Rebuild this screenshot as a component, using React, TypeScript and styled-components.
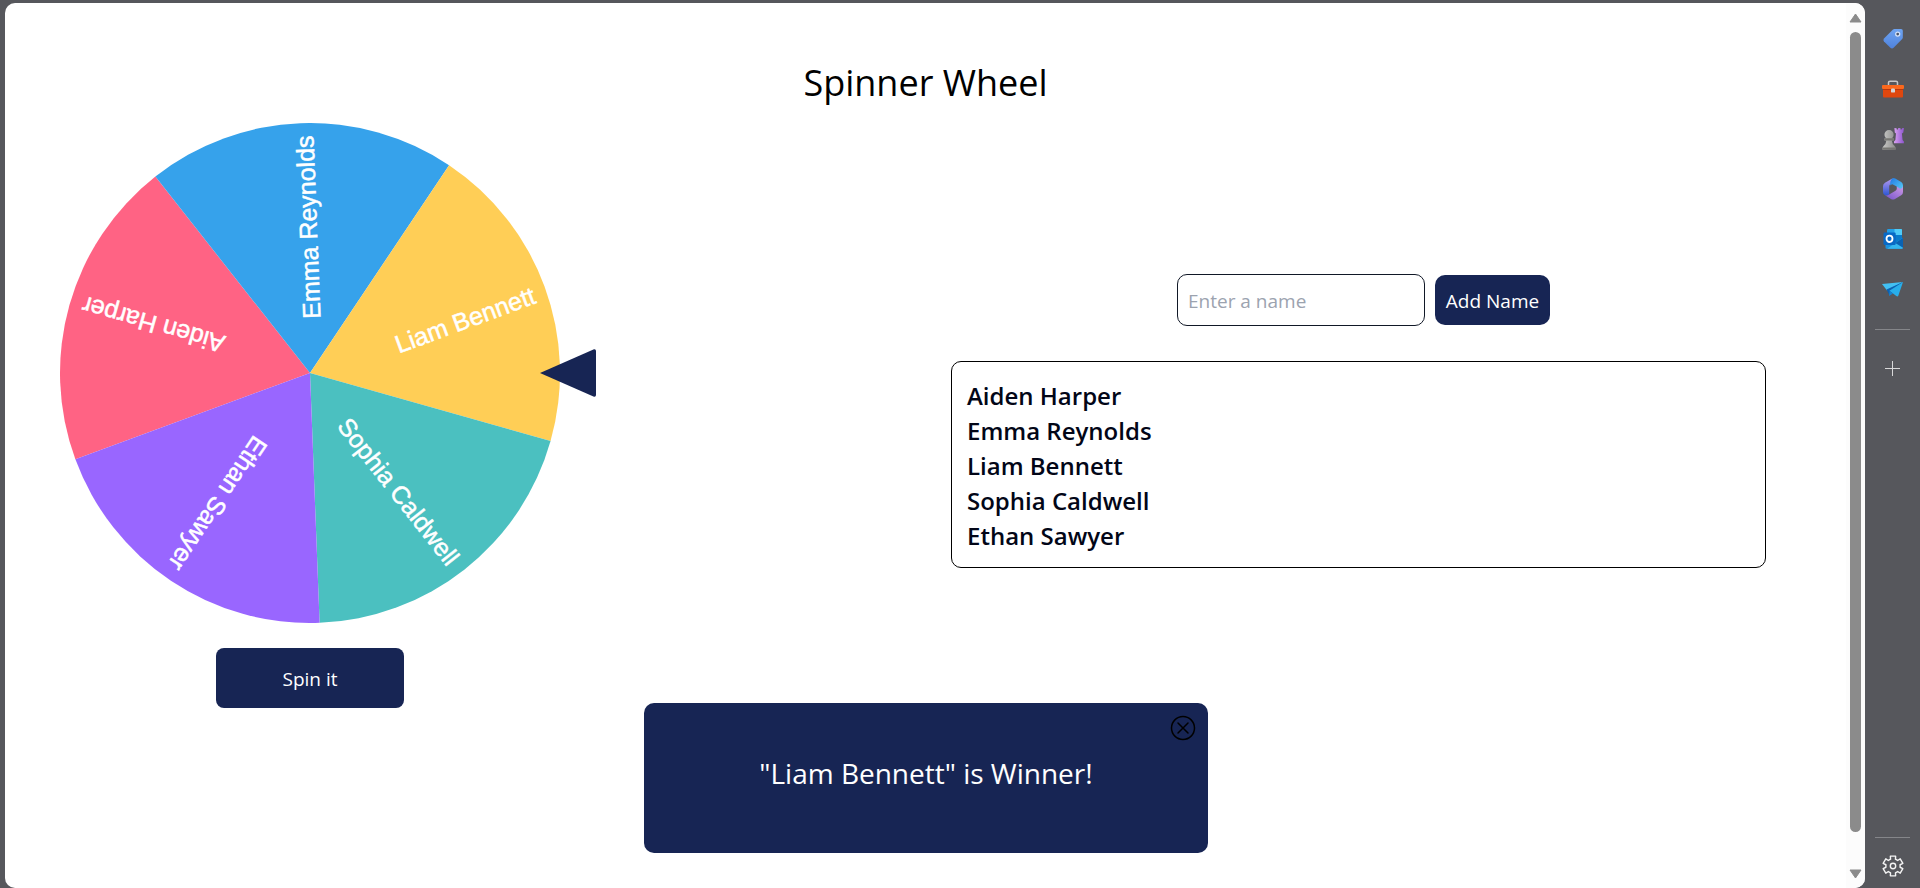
import React, { useState } from 'react';
import styled, { createGlobalStyle } from 'styled-components';

const navy = '#172554';
const chrome = '#56575c';

const GlobalStyle = createGlobalStyle`
  *, *::before, *::after { box-sizing: border-box; }
  body {
    margin: 0;
    background: ${chrome};
    color: #000;
    font-family: "Segoe UI", "Open Sans", "Noto Sans", sans-serif;
  }
  h1, ul, p { margin: 0; padding: 0; }
  button, input { font: inherit; }
`;

const Window = styled.div`
  display: flex;
  height: 100vh;
  padding: 3px 0 0 5px;
`;

const Viewport = styled.div`
  position: relative;
  flex: 1;
  min-width: 0;
  display: flex;
  overflow: hidden;
  background: #fff;
  border-radius: 10px;
`;

const Page = styled.main`
  flex: 1;
  min-width: 0;
  padding: 50px 80px 0 55px;
`;

const Title = styled.h1`
  margin: 0 -80px 10px -55px;
  text-align: center;
  font-size: 36px;
  line-height: 60px;
  font-weight: 400;
`;

const Columns = styled.div`
  display: grid;
  grid-template-columns: 1fr 1fr;
  column-gap: 76px;
  align-items: start;
`;

const WheelColumn = styled.section`
  display: flex;
  flex-direction: column;
  align-items: center;
  gap: 25px;
  width: 500px;
`;

const WheelStage = styled.div`
  position: relative;
  width: 500px;
  height: 500px;
`;

const WheelDrawing = styled.svg`
  display: block;
  width: 100%;
  height: 100%;
  font-family: Arial, "Liberation Sans", sans-serif;
`;

const Pointer = styled.svg`
  position: absolute;
  left: 480px;
  top: 226px;
  width: 56px;
  height: 48px;
`;

const SpinButton = styled.button`
  width: 188px;
  height: 60px;
  padding: 2px 0 0;
  border: 0;
  border-radius: 8px;
  background: ${navy};
  color: #fff;
  font-size: 19px;
  cursor: pointer;
`;

const NamesColumn = styled.section`
  display: flex;
  flex-direction: column;
  gap: 35px;
  padding-top: 151px;
`;

const NameForm = styled.form`
  display: flex;
  justify-content: center;
  align-items: center;
  gap: 10px;
  padding-left: 10px;
`;

const NameInput = styled.input`
  width: 248px;
  height: 52px;
  padding: 2px 10px 0;
  border: 1px solid #111827;
  border-radius: 10px;
  background: #fff;
  font-size: 19px;
  &::placeholder { color: #9ca3af; opacity: 1; }
`;

const AddButton = styled.button`
  width: 115px;
  height: 50px;
  padding: 2px 0 0;
  border: 0;
  border-radius: 10px;
  background: ${navy};
  color: #fff;
  font-size: 19px;
  white-space: nowrap;
  cursor: pointer;
`;

const NameList = styled.ul`
  && { padding: 16px 15px 14px; }
  list-style: none;
  border: 1px solid #000;
  border-radius: 10px;
  color: #020617;
  font-size: 24px;
  line-height: 35px;
  font-weight: 600;
`;

const Toast = styled.div`
  position: absolute;
  left: calc(50% - 9px);
  bottom: 35px;
  transform: translateX(-50%);
  width: 564px;
  height: 150px;
  padding-bottom: 10px;
  display: flex;
  align-items: center;
  justify-content: center;
  border-radius: 10px;
  background: ${navy};
  color: #fff;
  font-size: 28px;
`;

const CloseButton = styled.button`
  position: absolute;
  top: 12px;
  right: 12px;
  width: 26px;
  height: 26px;
  padding: 0;
  border: 0;
  background: none;
  cursor: pointer;
  svg { display: block; }
`;

const ScrollTrack = styled.div`
  display: flex;
  flex-direction: column;
  align-items: center;
  justify-content: space-between;
  width: 19px;
  padding: 10px 0 9px;
  background: #fcfcfc;
  svg { display: block; }
`;

const ScrollThumb = styled.div`
  flex: 1;
  width: 11px;
  margin: 9px 0 37px;
  border-radius: 6px;
  background: #8b8b8b;
`;

const Sidebar = styled.nav`
  display: flex;
  flex-direction: column;
  align-items: center;
  width: 55px;
  padding-top: 11px;
`;

const SidebarButton = styled.button`
  display: flex;
  flex-shrink: 0;
  align-items: center;
  justify-content: center;
  width: 50px;
  height: 50px;
  padding: 0;
  border: 0;
  background: none;
  cursor: pointer;
  svg { display: block; overflow: visible; }
`;

const Divider = styled.hr<{ $top: string }>`
  flex-shrink: 0;
  width: 35px;
  height: 1px;
  margin: ${(p) => p.$top} 0 0;
  border: 0;
  background: #85868a;
`;

const AddSlot = styled.div`
  padding-top: 14px;
`;

const SettingsSlot = styled.div`
  padding-top: 3px;
  margin-bottom: -3px;
`;

const Icon = ({ children }: { children: React.ReactNode }) => (
  <svg width="22" height="22" viewBox="0 0 22 22" aria-hidden="true">{children}</svg>
);

const TagIcon = () => (
  <Icon>
    <defs>
      <linearGradient id="tag" x1="0" y1="0" x2="0" y2="1">
        <stop offset="0" stopColor="#6ea4f2" /><stop offset="1" stopColor="#4f82dc" />
      </linearGradient>
    </defs>
    <path d="M11 1.4Q11.6 1 12.4 1H19Q20.8 1 20.8 2.8V9.4Q20.8 10.3 20.2 11L11.6 19.8Q10 21.3 8.4 19.8L2 13.6Q.7 12 2 10.4Z" fill="url(#tag)" />
    <circle cx="15.7" cy="6.1" r="2" fill="#48536a" stroke="#d5e2f7" strokeWidth="1.3" />
  </Icon>
);

const ToolboxIcon = () => (
  <Icon>
    <path d="M6.5 8V4.6Q6.5 3.2 8 3.2H14Q15.5 3.2 15.5 4.6V8" fill="none" stroke="#c5c6c8" strokeWidth="1.5" />
    <rect x="1" y="9" width="20" height="10.5" rx="1" fill="#df470e" />
    <rect x="0" y="7" width="22" height="4" rx="1" fill="#fa681d" />
    <path d="M1 11H21V12H1Z" fill="#b9360a" />
    <rect x="9" y="10.4" width="4" height="4.2" rx="1.2" fill="#d4d5d8" />
  </Icon>
);

const ChessIcon = () => (
  <Icon>
    <defs>
      <linearGradient id="rook"><stop offset="0" stopColor="#d9a1f2" /><stop offset="1" stopColor="#8d56cd" /></linearGradient>
      <linearGradient id="pawn"><stop offset="0" stopColor="#c9c9c7" /><stop offset="1" stopColor="#8b8c8b" /></linearGradient>
    </defs>
    <path d="M12.4 0L14.6.3 14.8 1.5H16L16.2.1H18.4L18.6 1.5H19.7L20 .3 22 0 21.3 4.4 19.9 5.5 20.6 12 21.9 13.6V15.3H12V13.6L13.4 12 14 5.5 12.8 4.4Z" fill="url(#rook)" />
    <path d="M2.6 10.2H4.1A4.6 4.6 0 1 1 10 10.2H11.6V12.6H9.8Q10.2 16 12.4 17.8 13.8 18.8 13.8 21.6H.4Q.4 18.8 1.8 17.8 4 16 4.4 12.6H2.6Z" fill="url(#pawn)" />
    <path d="M2.6 10.3H11.6V12.5H2.6ZM.4 19.6H13.8V21.6H.4Z" fill="#777773" />
  </Icon>
);

const SuiteIcon = () => (
  <Icon>
    <defs>
      <linearGradient id="suiteA" x1="0" y1="0" x2="0" y2="1"><stop offset="0" stopColor="#b79af0" /><stop offset="1" stopColor="#2d57d2" /></linearGradient>
      <linearGradient id="suiteB" x1="0" y1="0" x2="1" y2="1"><stop offset="0" stopColor="#2177e3" /><stop offset="1" stopColor="#5ad1f7" /></linearGradient>
      <linearGradient id="suiteC" x1="0" y1="1" x2="1" y2="0"><stop offset="0" stopColor="#7351c9" /><stop offset="1" stopColor="#cf9ae6" /></linearGradient>
    </defs>
    <path d="M10.4.4L3 4.7Q1 5.9 1 8.2V14Q1 16.2 3 17.2 5.2 17.8 7.2 16.5V8.6Q7.2 7 8.6 6.1L12 4Z" fill="url(#suiteA)" />
    <path d="M10.2.4Q11.7-.3 13.2.5L19.2 4Q21 5.2 21 7.4V12.7L14.8 9.4V8.6L10.4 6.2Q8.8 6.4 8.2 7.6 7.8 2.2 10.2.4Z" fill="url(#suiteB)" />
    <path d="M21 8V14Q21 16.2 19.2 17.3L13 21Q11 22.1 9 21L3 17.3Q5.2 17.8 7.2 16.5L13.5 12.8Q14.8 12 14.8 10.6V8.4L17.8 10.5Q20.5 11.2 21 8Z" fill="url(#suiteC)" />
  </Icon>
);

const MailIcon = () => (
  <Icon>
    <rect x="5" y="1" width="15" height="15" rx="1.2" fill="#239fe6" />
    <path d="M12.5 1H19Q20 1 20 2V7H12.5Z" fill="#4fcbf8" />
    <path d="M5 7H20V13L12.5 15Z" fill="#087acb" />
    <path d="M3.5 11L21 20Q20.6 20.7 19.7 20.7H4.6Q3.5 20.7 3.5 19.4Z" fill="#1a92df" />
    <path d="M21 9.8V19.4Q21 20.7 19.7 20.7H5L21 9.8Z" fill="#35b6ef" />
    <path d="M21 9.8V19.8L13.3 15Z" fill="#0a62b2" />
    <rect x="1.5" y="4.6" width="12.2" height="12.4" rx="1.2" fill="#0869c5" />
    <ellipse cx="7.5" cy="10.8" rx="3" ry="3.2" fill="none" stroke="#fff" strokeWidth="1.8" />
  </Icon>
);

const PlaneIcon = () => (
  <Icon>
    <path d="M0 5.9L21 4 5 12.4Z" fill="#42c0f3" />
    <path d="M4.5 11.6L21 4 7.6 17.6Z" fill="#0b61b2" />
    <path d="M7.4 12.8L21 4 16.4 17.4Q15.8 18.9 14.3 18.1Z" fill="#28aeea" />
    <path d="M7.6 13L11 15.4 7 18Z" fill="#1683d1" />
  </Icon>
);

const gearPath = (() => {
  const points: string[] = [];
  for (let i = 0; i < 6; i++) {
    const stops: [number, number][] = [[-20, 7.2], [-15, 10.2], [15, 10.2], [20, 7.2]];
    stops.forEach(([offset, radius]) => {
      const a = ((i * 60 - 90 + offset) * Math.PI) / 180;
      points.push(`${(11 + radius * Math.cos(a)).toFixed(2)} ${(11 + radius * Math.sin(a)).toFixed(2)}`);
    });
  }
  return `M${points.join('L')}Z`;
})();

const GearIcon = () => (
  <Icon>
    <path d={gearPath} fill="none" stroke="#f4f4f4" strokeWidth="1.4" strokeLinejoin="round" />
    <circle cx="11" cy="11" r="2.7" fill="none" stroke="#f4f4f4" strokeWidth="1.4" />
  </Icon>
);

const shortcuts = [
  { label: 'Shopping', Glyph: TagIcon },
  { label: 'Tools', Glyph: ToolboxIcon },
  { label: 'Games', Glyph: ChessIcon },
  { label: 'Microsoft 365', Glyph: SuiteIcon },
  { label: 'Outlook', Glyph: MailIcon },
  { label: 'Drop', Glyph: PlaneIcon },
];

const sliceColors = ['#ff6384', '#36a2eb', '#ffce56', '#4bc0c0', '#9966ff'];

function Wheel({ names, rotation }: { names: string[]; rotation: number }) {
  const step = 360 / names.length;
  const edge = (deg: number) => {
    const a = (deg * Math.PI) / 180;
    return `${200 * Math.cos(a)} ${200 * Math.sin(a)}`;
  };
  return (
    <WheelDrawing viewBox="-200 -200 400 400" role="img" aria-label="Wheel of names">
      {names.map((name, i) => {
        const start = rotation + i * step;
        return (
          <g key={name + i}>
            <path d={`M0 0L${edge(start)}A200 200 0 0 1 ${edge(start + step)}Z`} fill={sliceColors[i % sliceColors.length]} />
            <text x="190" y="10" textAnchor="end" fontSize="20" fill="#fff" stroke="#fff" strokeWidth="0.4" transform={`rotate(${start + step / 2})`}>{name}</text>
          </g>
        );
      })}
    </WheelDrawing>
  );
}

export default function App() {
  const [names, setNames] = useState(['Aiden Harper', 'Emma Reynolds', 'Liam Bennett', 'Sophia Caldwell', 'Ethan Sawyer']);
  const [draft, setDraft] = useState('');
  const [rotation, setRotation] = useState(159.8);
  const [winner, setWinner] = useState<string | null>('Liam Bennett');

  const spin = () => {
    const next = Math.random() * 360;
    const index = Math.floor((360 - next) / (360 / names.length)) % names.length;
    setRotation(next);
    setWinner(names[index]);
  };

  const addName = (event: React.FormEvent) => {
    event.preventDefault();
    if (!draft.trim()) return;
    setNames([...names, draft.trim()]);
    setDraft('');
  };

  return (
    <>
      <GlobalStyle />
      <Window>
        <Viewport>
          <Page>
            <Title>Spinner Wheel</Title>
            <Columns>
              <WheelColumn>
                <WheelStage>
                  <Wheel names={names} rotation={rotation} />
                  <Pointer viewBox="0 0 56 48" aria-hidden="true">
                    <path d="M0 24L54 .3Q56 0 56 2V46Q56 48 54 47.7Z" fill={navy} />
                  </Pointer>
                </WheelStage>
                <SpinButton type="button" onClick={spin}>Spin it</SpinButton>
              </WheelColumn>
              <NamesColumn>
                <NameForm onSubmit={addName}>
                  <NameInput aria-label="Name" placeholder="Enter a name" value={draft} onChange={(e) => setDraft(e.target.value)} />
                  <AddButton type="submit">Add Name</AddButton>
                </NameForm>
                <NameList>
                  {names.map((name, i) => <li key={name + i}>{name}</li>)}
                </NameList>
              </NamesColumn>
            </Columns>
          </Page>
          <ScrollTrack aria-hidden="true">
            <svg width="13" height="10" viewBox="0 0 13 10"><path d="M6.5 1L12 9H1Z" fill="#8b8b8b" stroke="#8b8b8b" strokeLinejoin="round" /></svg>
            <ScrollThumb />
            <svg width="13" height="10" viewBox="0 0 13 10"><path d="M6.5 9L12 1H1Z" fill="#8b8b8b" stroke="#8b8b8b" strokeLinejoin="round" /></svg>
          </ScrollTrack>
          {winner && (
            <Toast role="status">
              <p>"{winner}" is Winner!</p>
              <CloseButton type="button" aria-label="Close" onClick={() => setWinner(null)}>
                <svg width="26" height="26" viewBox="0 0 26 26" fill="none" stroke="#000" strokeWidth="1.5">
                  <circle cx="13" cy="13" r="11.5" />
                  <path d="M8 8L18 18M18 8L8 18" strokeLinecap="round" />
                </svg>
              </CloseButton>
            </Toast>
          )}
        </Viewport>
        <Sidebar aria-label="Browser sidebar">
          {shortcuts.map(({ label, Glyph }) => (
            <SidebarButton key={label} type="button" aria-label={label}><Glyph /></SidebarButton>
          ))}
          <Divider $top="15px" />
          <AddSlot>
            <SidebarButton type="button" aria-label="Add">
              <Icon><path d="M10.5 3V18M3 10.5H18" stroke="#d8d8d9" strokeWidth="1" /></Icon>
            </SidebarButton>
          </AddSlot>
          <Divider $top="auto" />
          <SettingsSlot>
            <SidebarButton type="button" aria-label="Settings"><GearIcon /></SidebarButton>
          </SettingsSlot>
        </Sidebar>
      </Window>
    </>
  );
}
